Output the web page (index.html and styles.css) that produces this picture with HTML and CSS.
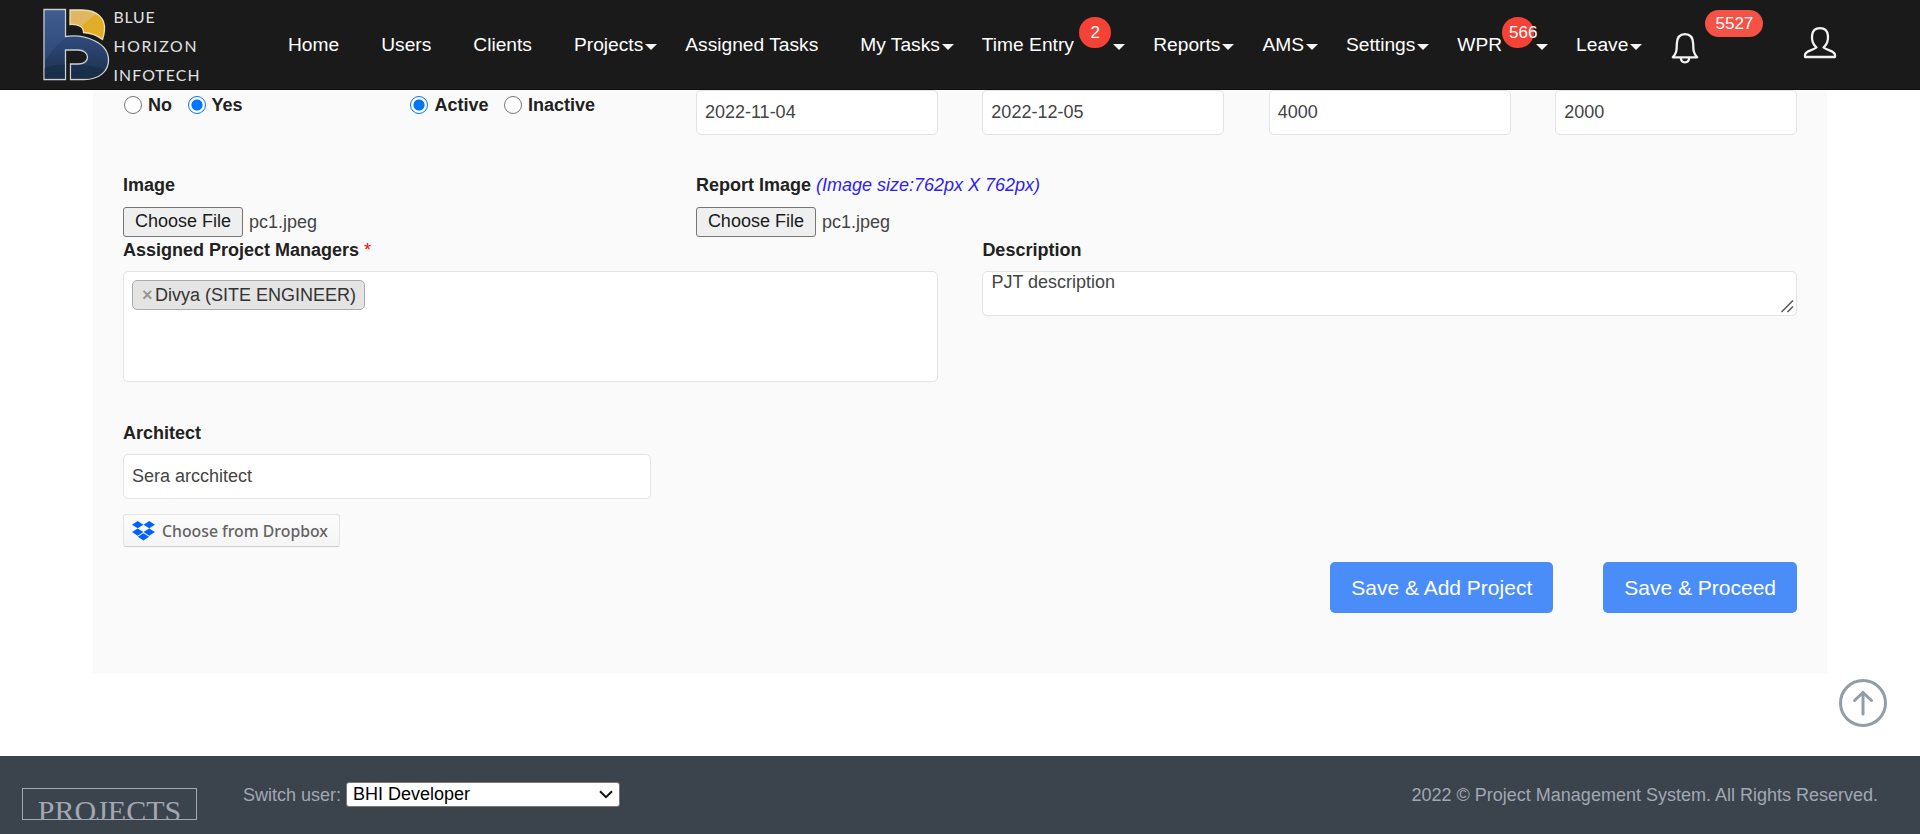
FILE: index.html
```html
<!DOCTYPE html>
<html lang="en">
<head>
<meta charset="utf-8">
<title>Project Management System</title>
<link rel="stylesheet" href="styles.css">
</head>
<body>
<header class="topbar">
  <a class="logo">
    <svg width="170" height="90" viewBox="0 0 170 90">
      <defs>
        <linearGradient id="blue" x1="0" y1="0" x2="0" y2="1">
          <stop offset="0" stop-color="#3d5a8c"/><stop offset=".5" stop-color="#2c4675"/><stop offset="1" stop-color="#1c3049"/>
        </linearGradient>
        <linearGradient id="gold" x1="0" y1="0" x2="1" y2="1">
          <stop offset="0" stop-color="#dfb765"/><stop offset=".42" stop-color="#e0b862"/><stop offset=".46" stop-color="#e2ac27"/><stop offset="1" stop-color="#e4ad28"/>
        </linearGradient>
      </defs>
      <path d="M14 9.500H35.500V36.500C46 35 56 36.500 65 41C74 45.500 78.500 51 78.500 60C78.500 71 70 79.500 54 79.500H40.500V64H49C60.500 64 60.500 50 48 50H35.500V79.500H14Z" fill="url(#blue)" stroke="#ccd0d6" stroke-width="1.300"/>
      <path d="M14.700 61C23 49 30 42 34.800 39V10.200H14.700Z" fill="#4a69a0" opacity=".25"/>
      <path d="M14.700 68C22 65 29 64.500 34.800 64.500V78.800H14.700ZM41.200 65C52 64.500 65 66 74 69C68 77 61 78.800 54 78.800H41.200Z" fill="#182b44" opacity=".6"/>
      <path d="M40 10H52C68 10 75.500 19 74.500 30Q74 36 72.500 39.500C67 35 61 33 53.500 32.500C53.500 27 49 24 40 24.500Z" fill="url(#gold)" stroke="#efe0b4" stroke-width="1.300"/>
      <g class="logo-text">
        <text x="83.500" y="23.200" textLength="41">BLUE</text>
        <text x="83.500" y="52" textLength="83">HORIZON</text>
        <text x="83.500" y="80.500" textLength="86">INFOTECH</text>
      </g>
    </svg>
  </a>
  <nav class="menu">
    <a class="item">Home</a>
    <a class="item">Users</a>
    <a class="item">Clients</a>
    <a class="item drop">Projects</a>
    <a class="item">Assigned Tasks</a>
    <a class="item drop">My Tasks</a>
    <a class="item drop">Time Entry <span class="count">2</span></a>
    <a class="item drop">Reports</a>
    <a class="item drop">AMS</a>
    <a class="item drop">Settings</a>
    <a class="item drop">WPR<span class="count wide">566</span></a>
    <a class="item drop">Leave</a>
  </nav>
  <div class="alerts">
    <svg class="bell" width="28" height="32" viewBox="0 0 28 32">
      <path d="M1.800 25.300C5.500 21.500 5.800 18 5.800 12C6 5.500 9 2.200 14 2.200S22 5.500 22.200 12C22.200 18 22.500 21.500 26.200 25.300Z"/>
      <path d="M9.800 25.500C10 32 18 32 18.200 25.500"/>
    </svg>
    <span class="alert-count">5527</span>
  </div>
  <svg class="user" width="34" height="33" viewBox="0 0 34 33">
    <path d="M13.500 21.500C7 15.500 7 2.200 17 2.200S27 15.500 20.500 21.500C24 24.500 32 24.500 32 29V31H2V29C2 24.500 10 24.500 13.500 21.500Z"/>
  </svg>
</header>

<main class="panel">
  <div class="grid first-row">
    <div class="radios">
      <span class="radio"></span><b>No</b><span class="radio on"></span><b>Yes</b>
    </div>
    <div class="radios">
      <span class="radio on"></span><b>Active</b><span class="radio"></span><b>Inactive</b>
    </div>
    <div class="field">2022-11-04</div>
    <div class="field">2022-12-05</div>
    <div class="field">4000</div>
    <div class="field">2000</div>
  </div>

  <div class="grid files-row">
    <div class="two">
      <label class="label">Image</label>
      <div class="file"><span class="file-btn">Choose File</span>pc1.jpeg</div>
    </div>
    <div class="two">
      <label class="label">Report Image <i class="hint">(Image size:762px X 762px)</i></label>
      <div class="file"><span class="file-btn">Choose File</span>pc1.jpeg</div>
    </div>
  </div>

  <div class="grid">
    <div class="three">
      <label class="label">Assigned Project Managers <span class="req">*</span></label>
      <div class="field multi"><span class="chip"><span class="chip-x">×</span>Divya (SITE ENGINEER)</span></div>
    </div>
    <div class="three">
      <label class="label">Description</label>
      <div class="field area">PJT description
        <svg class="grip" width="13" height="13" viewBox="0 0 13 13"><path d="M.5 12L12 .5M6.500 12L12 6.500"/></svg>
      </div>
    </div>
  </div>

  <div class="grid architect-row">
    <div class="two">
      <label class="label">Architect</label>
      <div class="field">Sera arcchitect</div>
    </div>
  </div>

  <div class="dropbox">
    <svg width="23" height="20" viewBox="0 0 23 20" fill="#0061fe">
      <path d="M5.700 0L11.400 3.650 5.700 7.300 0 3.650ZM17.200 0L22.900 3.650 17.200 7.300 11.500 3.650ZM5.700 7.400L11.400 11.050 5.700 14.700 0 11.050ZM17.200 7.400L22.900 11.050 17.200 14.700 11.500 11.050ZM11.450 12.200L17.150 15.800 11.450 19.500 5.750 15.800Z"/>
    </svg>
    <span>Choose from Dropbox</span>
  </div>

  <div class="actions">
    <button class="btn">Save &amp; Add Project</button>
    <button class="btn">Save &amp; Proceed</button>
  </div>
</main>

<svg class="to-top" width="48" height="48" viewBox="0 0 48 48">
  <circle cx="24" cy="24" r="22.500"/>
  <path d="M24 35V14M15.500 21.500L24 13.500 32.500 21.500" stroke-linecap="round"/>
</svg>

<footer class="footer">
  <div class="brand"><span>PROJECTS</span></div>
  <span class="switch-label">Switch user:</span>
  <div class="select">BHI Developer
    <svg width="14" height="9" viewBox="0 0 14 9"><path d="M1 1.200L7 7.200 13 1.200"/></svg>
  </div>
  <span class="copyright">2022 © Project Management System. All Rights Reserved.</span>
</footer>
</body>
</html>
```

FILE: styles.css
```css
* { box-sizing: border-box; }

body {
  margin: 0;
  height: 834px;
  overflow: hidden;
  display: flex;
  flex-direction: column;
  background: #fff;
  color: #212121;
  font: 18px/27px "Liberation Sans", Arial, sans-serif;
}

.topbar {
  flex: none;
  height: 90px;
  display: flex;
  background: #1a1a1a;
  border-bottom: 1px solid #101010;
  color: #fff;
}
.logo { width: 236px; padding-left: 30px; display: block; }
.logo-text { fill: #e2e2e2; font: 15.800px Lato, sans-serif; }
.menu { display: flex; padding-left: 31px; }
.item {
  position: relative;
  padding: 30px 21px 0;
  font-size: 19.200px;
  line-height: 29px;
  white-space: nowrap;
}
.drop::after {
  content: "";
  position: absolute;
  right: 7px;
  top: 44px;
  border: 6px solid transparent;
  border-top-color: #f4f4f4;
  border-bottom: 0;
}
.count {
  display: inline-block;
  width: 32px;
  height: 31px;
  border-radius: 16px;
  background: #f44336;
  font-size: 17px;
  line-height: 31px;
  text-align: center;
  vertical-align: 13px;
  margin: -30px 0;
}
.count.wide { text-align: left; padding-left: 7px; }

.alerts { display: flex; align-items: flex-start; margin-left: 22px; }
.bell { margin-top: 32px; }
.bell path, .user path { fill: none; stroke: #f2f2f2; stroke-width: 2.300; stroke-linejoin: round; }
.alert-count {
  width: 58px;
  height: 27px;
  margin: 10px 0 0 6px;
  border-radius: 14px;
  background: #f55246;
  font-size: 17px;
  line-height: 27px;
  text-align: center;
}
.user { margin: 26px 83px 0 auto; }

.panel {
  flex: none;
  width: 1734px;
  height: 583px;
  margin-left: 93px;
  padding: 0 30px;
  background: #fafafa;
}
.grid { display: grid; grid-template-columns: repeat(6, 1fr); column-gap: 44.750px; }
.two { grid-column: span 2; }
.three { grid-column: span 3; }
.first-row { height: 81px; }
.files-row { height: 66px; }

.radios { display: flex; height: 30px; align-items: center; white-space: nowrap; }
.radio {
  flex: none;
  width: 18px;
  height: 18px;
  margin: 0 6px 0 1px;
  border: 1.500px solid #767676;
  border-radius: 50%;
  background: #fff;
}
.radios b + .radio { margin-left: 15.500px; }
.radio.on { border: 1.500px solid #0075ff; background: radial-gradient(circle, #0075ff 5.200px, #fff 5.900px); }

.field {
  height: 45px;
  padding: 8px 8px 0;
  border: 1px solid #e3e3e3;
  border-radius: 5px;
  background: #fff;
  color: #444;
}
.label { display: block; height: 34px; font-weight: 700; white-space: nowrap; }
.files-row .label { height: 36px; line-height: 29px; }
.hint { font-weight: 400; color: #2b21f5; }
.req { color: #f00; font-weight: 400; }
.file { display: flex; color: #444; line-height: 31px; }
.file-btn {
  width: 120px;
  height: 30px;
  margin-right: 6px;
  border: 1px solid #767676;
  border-radius: 3px;
  background: #efefef;
  color: #1a1a1a;
  line-height: 27px;
  text-align: center;
}
.multi { height: 111px; }
.chip {
  display: inline-flex;
  height: 30px;
  padding: 0 8px 0 9px;
  border: 1px solid #aaa;
  border-radius: 5px;
  background: #e4e4e4;
  color: #333;
  line-height: 28px;
}
.chip-x { width: 13px; color: #999; font-weight: 700; }
.area { position: relative; padding-top: 0; line-height: 20px; }
.grip { position: absolute; right: 2px; bottom: 2px; }
.grip path { fill: none; stroke: #555; stroke-width: 1.500; }
.architect-row { margin-top: 38px; }

.dropbox {
  width: 217px;
  height: 33px;
  margin-top: 15px;
  padding-left: 8px;
  display: flex;
  align-items: center;
  gap: 7px;
  border: 1px solid #e4e4e4;
  border-bottom-color: #d0d0d0;
  border-radius: 3px;
  background: linear-gradient(#fcfcfc, #f5f5f5);
  color: #636363;
  font: 500 15.800px "Noto Sans", sans-serif;
  white-space: nowrap;
}

.actions { display: flex; justify-content: flex-end; gap: 50px; margin-top: 15px; }
.btn {
  height: 51px;
  padding: 0 21px;
  border: 0;
  border-radius: 5px;
  background: #4b8df8;
  color: #fff;
  font: 21px "Liberation Sans", Arial, sans-serif;
}

.to-top { flex: none; align-self: flex-end; margin: 6px 33px 0 0; fill: none; stroke: #949ca8; stroke-width: 3; }

.footer {
  flex: none;
  height: 78px;
  margin-top: 29px;
  padding: 0 42px 0 22px;
  display: flex;
  align-items: flex-start;
  background: #3b434c;
  color: #a1a8b4;
}
.brand {
  width: 175px;
  height: 32px;
  margin: 32px 46px 0 0;
  border: 1px solid #a1a8b4;
  overflow: hidden;
  text-align: center;
  font: 30px/44px "Liberation Serif", serif;
}
.switch-label { margin-top: 26px; }
.select {
  width: 274px;
  height: 25px;
  margin: 26px auto 0 5px;
  padding: 0 6px;
  display: flex;
  align-items: center;
  justify-content: space-between;
  border: 1px solid #767676;
  border-radius: 3px;
  background: #fff;
  color: #000;
}
.select path { fill: none; stroke: #111; stroke-width: 2; }
.copyright { margin-top: 26px; }
```
